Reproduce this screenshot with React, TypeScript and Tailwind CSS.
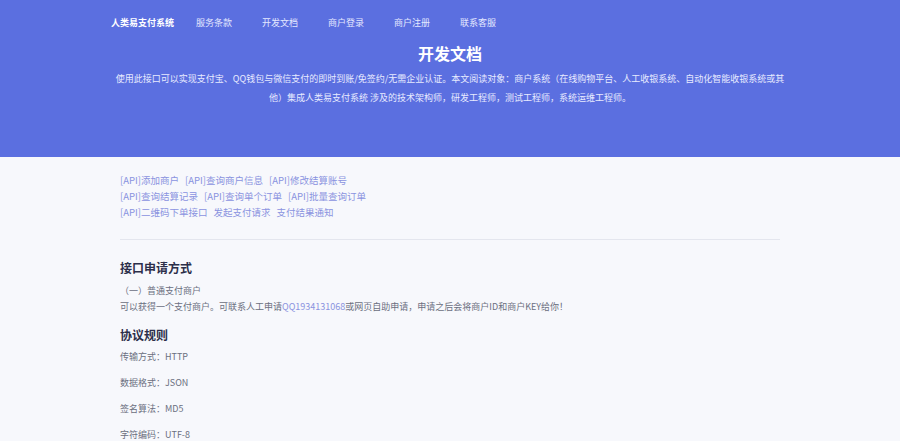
import React from 'react';

const font = { fontFamily: '"Noto Sans CJK SC", "Noto Sans", sans-serif' };

export default function App() {
  const nav = ['服务条款', '开发文档', '商户登录', '商户注册', '联系客服'];
  const links = [
    ['[API]添加商户', '[API]查询商户信息', '[API]修改结算账号'],
    ['[API]查询结算记录', '[API]查询单个订单', '[API]批量查询订单'],
    ['[API]二维码下单接口', '发起支付请求', '支付结果通知'],
  ];
  return (
    <div style={font} className="min-h-[441px] bg-[#f7f8fc] text-[#6b6f80]">
      <div className="bg-[#5b6fe0] h-[157px] pt-[14px]">
        <div className="flex items-center pl-[111px] h-[18px] text-[9px] text-[#e4e8ff]">
          <span className="font-bold text-white mr-[22px]">人类易支付系统</span>
          {nav.map(n => <span key={n} className="mr-[30px]">{n}</span>)}
        </div>
        <div className="text-center text-white font-bold text-[16px] mt-[9px] leading-[24px]">开发文档</div>
        <div className="mx-auto w-[680px] text-center text-[9px] leading-[19px] text-[#e8ebff] mt-[4px]">
          使用此接口可以实现支付宝、QQ钱包与微信支付的即时到账/免签约/无需企业认证。本文阅读对象：商户系统（在线购物平台、人工收银系统、自动化智能收银系统或其他）集成人类易支付系统 涉及的技术架构师，研发工程师，测试工程师，系统运维工程师。
        </div>
      </div>
      <div className="mx-[120px] pt-[172px-157px]">
        <div className="pt-[15px] text-[9.5px] leading-[16px] text-[#8a93e0] pb-[19px] border-b border-[#e4e6ee]">
          {links.map((row, i) => (
            <div key={i} className="flex gap-[6px]">{row.map(l => <span key={l}>{l}</span>)}</div>
          ))}
        </div>
        <div className="mt-[18px] text-[12px] font-bold text-[#2c2f4a] leading-[20px]">接口申请方式</div>
        <div className="text-[9px] leading-[16px] mt-[5px]">（一）普通支付商户</div>
        <div className="text-[9px] leading-[16px]">可以获得一个支付商户。可联系人工申请<span className="text-[#8a93e0]">QQ1934131068</span>或网页自助申请，申请之后会将商户ID和商户KEY给你！</div>
        <div className="mt-[10px] text-[12px] font-bold text-[#2c2f4a] leading-[20px]">协议规则</div>
        <div className="text-[9px] leading-[26px] mt-[-1px]">
          <div>传输方式：HTTP</div>
          <div>数据格式：JSON</div>
          <div>签名算法：MD5</div>
          <div>字符编码：UTF-8</div>
        </div>
      </div>
    </div>
  );
}
